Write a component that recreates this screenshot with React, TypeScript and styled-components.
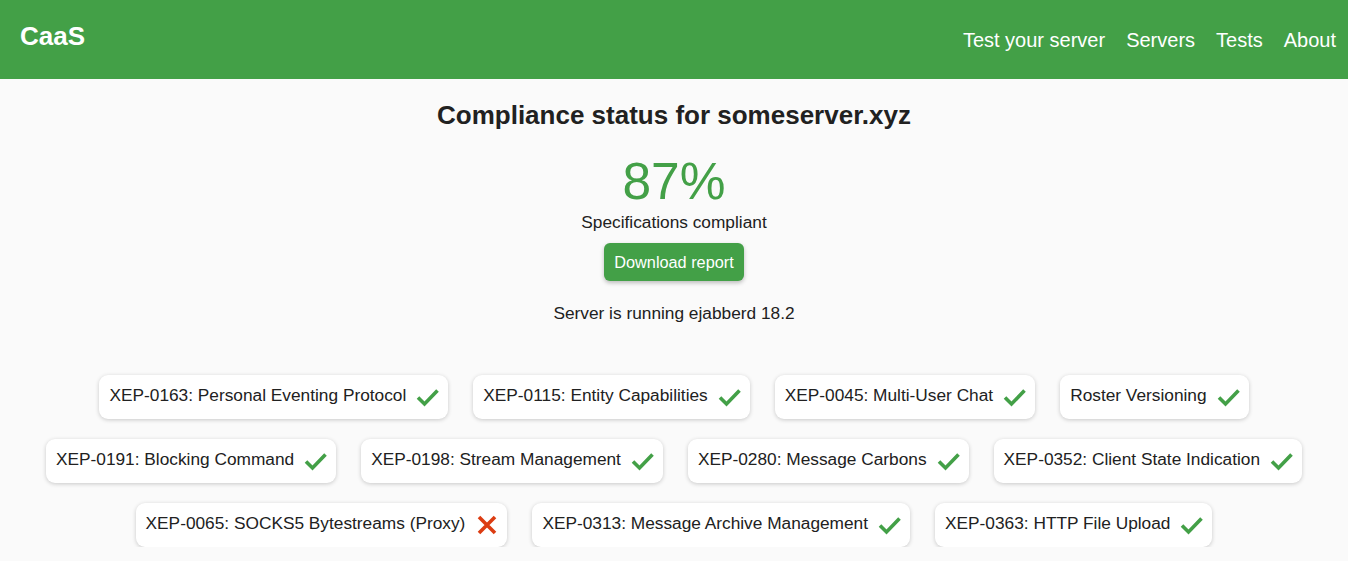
import React from "react";
import styled, { createGlobalStyle } from "styled-components";

const Global = createGlobalStyle`
  html, body { margin: 0; padding: 0; background: #fafafa; }
  body { font-family: "Liberation Sans", Arial, sans-serif; color: #212121; }
`;

const Header = styled.header`
  height: 79px;
  background: #43a047;
  display: flex;
  align-items: flex-start;
  justify-content: space-between;
  color: #fff;
  box-sizing: border-box;
`;

const Brand = styled.div`
  font-size: 26px;
  font-weight: bold;
  padding: 21px 0 0 20px;
  line-height: 30px;
`;

const Nav = styled.nav`
  display: flex;
  gap: 21px;
  padding: 28px 12px 0 0;
  font-size: 20px;
  line-height: 24px;
`;

const NavLink = styled.a`
  color: #fff;
  text-decoration: none;
`;

const Main = styled.main`
  display: flex;
  flex-direction: column;
  align-items: center;
`;

const Heading = styled.h1`
  margin: 20px 0 0;
  font-size: 26px;
  line-height: 32px;
  font-weight: bold;
  color: #212121;
`;

const Percent = styled.div`
  margin-top: 22px;
  font-size: 51.5px;
  line-height: 56px;
  color: #43a047;
`;

const Subtitle = styled.div`
  font-size: 17.3px;
  line-height: 24px;
  margin-top: 1px;
`;

const Button = styled.button`
  margin-top: 9px;
  height: 38px;
  padding: 0 10px;
  border: none;
  border-radius: 6px;
  background: #43a047;
  color: #fff;
  font-family: "Liberation Sans", Arial, sans-serif;
  font-size: 16.3px;
  box-shadow: 0 2px 4px rgba(0, 0, 0, 0.25);
  cursor: pointer;
`;

const ServerInfo = styled.div`
  margin-top: 20px;
  font-size: 17.3px;
  line-height: 24px;
`;

const ChipList = styled.div`
  margin-top: 50px;
  display: flex;
  flex-wrap: wrap;
  justify-content: center;
  column-gap: 25px;
  row-gap: 20px;
  width: 100%;
`;

const Chip = styled.div`
  height: 44px;
  display: flex;
  align-items: center;
  gap: 10px;
  padding: 0 8px 0 10px;
  background: #fff;
  border-radius: 9px;
  box-shadow: 0 1px 4px rgba(0, 0, 0, 0.2);
  font-size: 17.3px;
  box-sizing: border-box;
`;

const ChipLabel = styled.span`
  margin-bottom: 4px;
`;

const Icon = styled.svg<{ $ok: boolean }>`
  width: 24px;
  height: 24px;
  flex: none;
  color: ${(p) => (p.$ok ? "#43a047" : "#dc3c12")};
`;

const Check = () => (
  <Icon $ok viewBox="0 0 24 24">
    <polyline points="2,12.5 8.5,19 21.5,5.5" fill="none" stroke="currentColor" strokeWidth="3.6" />
  </Icon>
);

const Cross = () => (
  <Icon $ok={false} viewBox="0 0 24 24">
    <path d="M4 4 L20 20 M20 4 L4 20" fill="none" stroke="currentColor" strokeWidth="3.6" />
  </Icon>
);

const items: [string, boolean][] = [
  ["XEP-0163: Personal Eventing Protocol", true],
  ["XEP-0115: Entity Capabilities", true],
  ["XEP-0045: Multi-User Chat", true],
  ["Roster Versioning", true],
  ["XEP-0191: Blocking Command", true],
  ["XEP-0198: Stream Management", true],
  ["XEP-0280: Message Carbons", true],
  ["XEP-0352: Client State Indication", true],
  ["XEP-0065: SOCKS5 Bytestreams (Proxy)", false],
  ["XEP-0313: Message Archive Management", true],
  ["XEP-0363: HTTP File Upload", true],
];

export default function App() {
  return (
    <>
      <Global />
      <Header>
        <Brand>CaaS</Brand>
        <Nav>
          <NavLink href="#">Test your server</NavLink>
          <NavLink href="#">Servers</NavLink>
          <NavLink href="#">Tests</NavLink>
          <NavLink href="#">About</NavLink>
        </Nav>
      </Header>
      <Main>
        <Heading>Compliance status for someserver.xyz</Heading>
        <Percent>87%</Percent>
        <Subtitle>Specifications compliant</Subtitle>
        <Button>Download report</Button>
        <ServerInfo>Server is running ejabberd 18.2</ServerInfo>
        <ChipList>
          {items.map(([name, ok]) => (
            <Chip key={name}>
              <ChipLabel>{name}</ChipLabel>
              {ok ? <Check /> : <Cross />}
            </Chip>
          ))}
        </ChipList>
      </Main>
    </>
  );
}
